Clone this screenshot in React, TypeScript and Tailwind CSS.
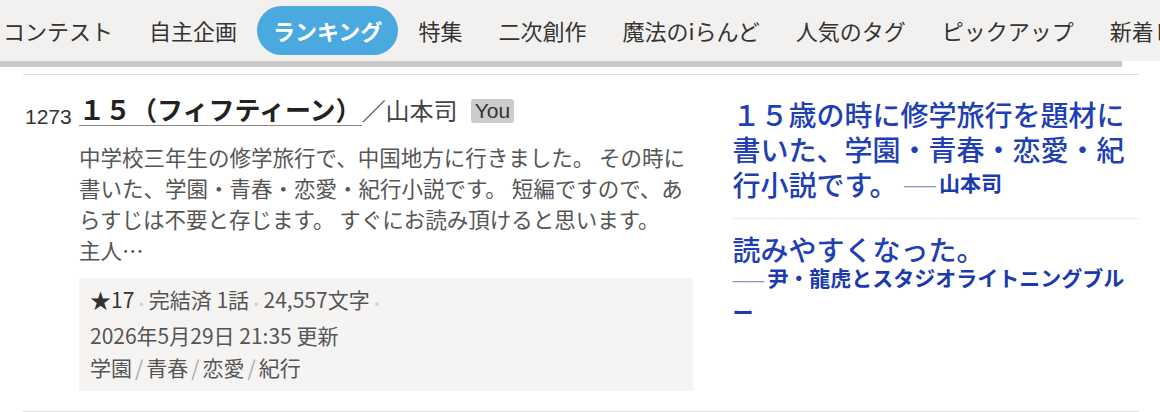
import type { FC } from "react";

const navItems = [
  { key: "contest", label: "コンテスト" },
  { key: "original", label: "自主企画" },
  { key: "ranking", label: "ランキング" },
  { key: "feature", label: "特集" },
  { key: "fanfic", label: "二次創作" },
  { key: "iland", label: "魔法のiらんど" },
  { key: "tags", label: "人気のタグ" },
  { key: "pickup", label: "ピックアップ" },
  { key: "new", label: "新着レビュー" },
];

const tags = ["学園", "青春", "恋愛", "紀行"];

const Dot: FC = () => <span className="mx-[5px] text-[13px] text-[#d0d0d0]">•</span>;

const Review: FC<{ text: string; by: string }> = ({ text, by }) => (
  <p className="text-[28px] leading-[35px] font-medium text-[#1e40b4]">
    {text}
    {/* author line drops below the quote as one block when it doesn't fit */}
    <span className="relative -top-[5px] inline-block text-[21px] leading-[30px] font-bold text-[#1a3aae]">
      <span className="font-normal text-[16px] text-[#8898c8] font-['Liberation_Sans',sans-serif]">
        ——
      </span>
      <span className="ml-[3px]">{by}</span>
    </span>
  </p>
);

export default function App() {
  const active = "ranking";

  return (
    <div className="w-[1160px] h-[412px] overflow-hidden bg-white font-['Noto_Sans_CJK_JP',sans-serif]">
      <nav className="bg-[#f2f1f0]">
        <ul className="flex items-center h-[61px] ml-[-13px] whitespace-nowrap">
          {navItems.map((n) => (
            <li
              key={n.key}
              className={`flex items-center h-[49px] px-4 mr-1 rounded-full text-[22px] ${
                n.key === active ? "bg-[#4aa9df] text-white font-bold" : "text-[#333]"
              }`}
            >
              {n.label}
            </li>
          ))}
        </ul>
      </nav>
      <div className="h-[6px] w-[1122px] bg-[#cbcac9]" />

      <div className="ml-[23px] w-[1116px] mt-[7px] border-t border-[#dddddd]">
        <article className="flex gap-5 border-b border-[#dddddd] pb-[20px]">
          {/* left: work info */}
          <div className="flex w-[690px] pt-[18px]">
            <div className="w-[56px] pt-[8px] pl-[2px] text-[21px] leading-[32px] text-[#333] font-['Liberation_Sans',sans-serif]">
              1273
            </div>
            <div className="w-[614px]">
              <h2 className="flex items-end leading-[32px]">
                <span className="border-b border-[#888] text-[26px] font-bold text-[#222]">
                  １５（フィフティーン）
                </span>
                <span className="text-[24px] text-[#444]">／山本司</span>
                <span className="ml-[13px] mb-[3px] px-[4px] rounded-[3px] bg-[#cccccc] text-[21px] leading-[24px] text-[#333] font-['Liberation_Sans',sans-serif]">
                  You
                </span>
              </h2>
              <p className="mt-[15px] text-[21.5px] leading-[31px] text-[#555]">
                中学校三年生の修学旅行で、中国地方に行きました。 その時に書いた、学園・青春・恋愛・紀行小説です。 短編ですので、あらすじは不要と存じます。 すぐにお読み頂けると思います。
                <br />
                主人…
              </p>
              <div className="mt-[13px] bg-[#f5f4f3] px-[11px] pt-[5px] pb-[8px] text-[21px] leading-[32px] text-[#555]">
                <div>
                  <span className="text-[#333]">★17</span>
                  <Dot />
                  完結済 1話
                  <Dot />
                  24,557文字
                  <Dot />
                </div>
                <div>2026年5月29日 21:35 更新</div>
                <div>
                  {tags.map((t, i) => (
                    <span key={t}>
                      {i > 0 && <span className="mx-[3px] text-[#aaa]">/</span>}
                      {t}
                    </span>
                  ))}
                </div>
              </div>
            </div>
          </div>

          {/* right: reviews */}
          <div className="w-[407px] pt-[22px]">
            <div className="border-b border-[#eeeeee] pb-[12px]">
              <Review text="１５歳の時に修学旅行を題材に書いた、学園・青春・恋愛・紀行小説です。 " by="山本司" />
            </div>
            <div className="pt-[13px]">
              <Review text="読みやすくなった。" by="尹・龍虎とスタジオライトニングブルー" />
            </div>
          </div>
        </article>
      </div>
    </div>
  );
}
